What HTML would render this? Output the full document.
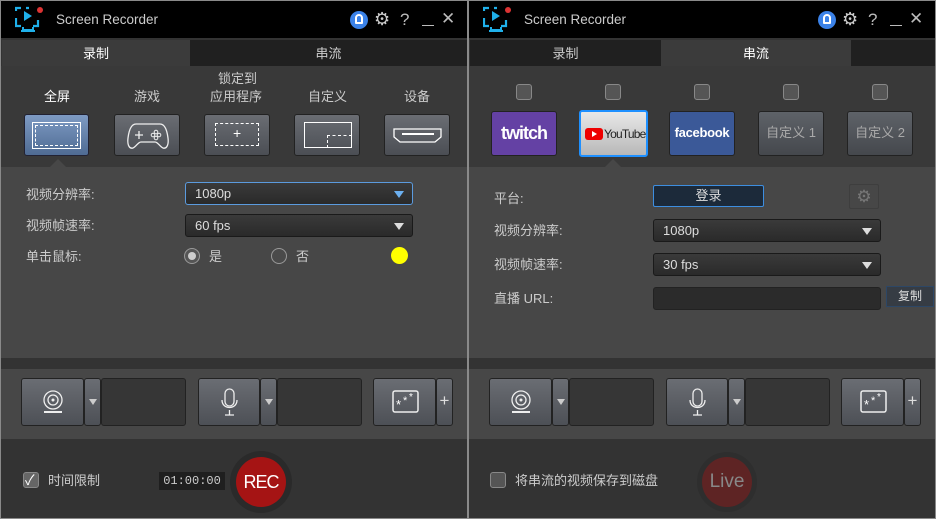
<!DOCTYPE html>
<html><head><meta charset="utf-8"><style>
*{margin:0;padding:0;box-sizing:border-box}
body{width:936px;height:519px;background:#000;position:relative;overflow:hidden;font-family:"Liberation Sans","Noto Sans CJK SC",sans-serif;font-size:13px;color:#ddd}
.w{position:absolute;top:0;width:468px;height:519px;border:1px solid #8a8a8a;background:#333;overflow:hidden}
.a{position:absolute}
.title{left:0;top:0;width:466px;height:37px;background:#000}
.tt{left:55px;top:11px;font-size:13.5px;color:#ccc;line-height:16px}
.tab{top:39px;height:27px;text-align:center;line-height:27px;font-size:13px;color:#ccc}
.mode{left:0;top:65px;width:466px;height:101px;background:#393939}
.set{left:0;top:166px;width:466px;height:191px;background:#474747}
.sep{left:0;top:357px;width:466px;height:11px;background:#333}
.tool{left:0;top:368px;width:466px;height:70px;background:#474747}
.bot{left:0;top:438px;width:466px;height:80px;background:#333}
.btn{height:42px;border:1px solid #222;border-radius:3px;background:linear-gradient(#6a6d73,#4b4e54);}
.lbl{font-size:13px;color:#ccc;line-height:16px}
.dd{height:23px;border:1px solid #1a1a1a;border-radius:3px;background:linear-gradient(#3a3a3a,#2a2a2a);color:#ddd;padding-left:9px;line-height:21px;font-size:13px}
.tri{position:absolute;right:8px;top:8px;width:0;height:0;border-left:5px solid transparent;border-right:5px solid transparent;border-top:7px solid #ddd}
.tb{top:377px;height:48px;border:1px solid #222;border-radius:3px;background:linear-gradient(#6a6d73,#4d5056)}
.pn{top:377px;height:48px;border:1px solid #222;border-radius:3px;background:#363636}
.cb{width:16px;height:16px;border:1px solid #888;border-radius:3px;background:#555}
</style></head><body>

<!-- LEFT -->
<div class="w" style="left:0">
<div class="a title"></div>
<svg class="a" style="left:14px;top:5px" width="30" height="28" viewBox="0 0 30 28"><path d="M1 5V2h5M1 12v8h5M18 20h5v-6M11 2h3" stroke="#1fb0ea" stroke-width="2.2" fill="none"/><path d="M9 5l8 5-8 5z" fill="#1fb0ea"/><path d="M8 21v3h10v-3M6 25h14" stroke="#1fb0ea" stroke-width="2" fill="none"/><circle cx="25" cy="4" r="3" fill="#d33"/></svg>
<div class="a tt">Screen Recorder</div>
<div class="a" style="left:349px;top:10px;width:18px;height:18px;border-radius:50%;background:#3b82e8"></div>
<div class="a" style="left:354px;top:13px;width:8px;height:10px;border:2px solid #fff;border-radius:4px 4px 1px 1px"></div>
<div class="a" style="left:373px;top:7px;font-size:18px;color:#ccc;line-height:22px">⚙</div>
<div class="a" style="left:399px;top:9px;font-size:17px;color:#bbb;line-height:20px">?</div>
<div class="a" style="left:421px;top:24px;width:12px;height:1px;background:#bbb"></div>
<div class="a" style="left:440px;top:8px;font-size:17px;color:#bbb;line-height:20px">✕</div>
<div class="a tab" style="left:1px;width:188px;background:#3b3b3b;color:#fff">录制</div>
<div class="a tab" style="left:189px;width:277px;background:#202020">串流</div>
<div class="a mode"></div>
<div class="a lbl" style="left:43px;top:88px;color:#fff">全屏</div>
<div class="a lbl" style="left:133px;top:88px">游戏</div>
<div class="a lbl" style="left:217px;top:70px">锁定到</div>
<div class="a lbl" style="left:209px;top:88px">应用程序</div>
<div class="a lbl" style="left:307px;top:88px">自定义</div>
<div class="a lbl" style="left:403px;top:88px">设备</div>
<div class="a btn" style="left:23px;top:113px;width:65px;background:linear-gradient(#7e9bc4,#4f6b93);border-color:#223"><div class="a" style="left:7px;top:7px;width:49px;height:27px;border:1px solid #fff;outline:1px dashed #fff;outline-offset:-4px"></div></div>
<div class="a btn" style="left:113px;top:113px;width:66px"><svg class="a" style="left:12px;top:6px" width="42" height="30"><path d="M9 3h24c5 0 7 6 8 14 1 8-2 11-5 10-3-1-5-6-8-6h-14c-3 0-5 5-8 6-3 1-6-2-5-10 1-8 3-14 8-14z" stroke="#eee" fill="none" stroke-width="1.3"/><path d="M12 10v8M8 14h8" stroke="#eee" stroke-width="1.3"/><circle cx="29" cy="11" r="1.8" stroke="#eee" fill="none"/><circle cx="26" cy="14" r="1.8" stroke="#eee" fill="none"/><circle cx="32" cy="14" r="1.8" stroke="#eee" fill="none"/><circle cx="29" cy="17" r="1.8" stroke="#eee" fill="none"/></svg></div>
<div class="a btn" style="left:203px;top:113px;width:66px"><div class="a" style="left:10px;top:8px;width:44px;height:23px;border:1px dashed #fff"></div><div class="a" style="left:28px;top:10px;color:#fff;font-size:14px">+</div></div>
<div class="a btn" style="left:293px;top:113px;width:66px"><div class="a" style="left:9px;top:7px;width:48px;height:26px;border:1px solid #fff"></div><div class="a" style="left:32px;top:20px;width:25px;height:13px;border-left:1px dashed #fff;border-top:1px dashed #fff"></div></div>
<div class="a btn" style="left:383px;top:113px;width:66px"><svg class="a" style="left:8px;top:12px" width="50" height="18"><path d="M1 2h47v8l-6 5H7l-6-5z" stroke="#fff" fill="none" stroke-width="1.3"/><path d="M9 7h32" stroke="#fff" stroke-width="2"/></svg></div>
<div class="a" style="left:49px;top:158px;width:0;height:0;border-left:8px solid transparent;border-right:8px solid transparent;border-bottom:8px solid #474747"></div>
<div class="a set"></div>
<div class="a lbl" style="left:25px;top:186px">视频分辨率:</div>
<div class="a lbl" style="left:25px;top:217px">视频帧速率:</div>
<div class="a lbl" style="left:25px;top:248px">单击鼠标:</div>
<div class="a dd" style="left:184px;top:181px;width:228px;border-color:#5b9bde">1080p<div class="tri" style="border-top-color:#6cb0f0"></div></div>
<div class="a dd" style="left:184px;top:213px;width:228px">60 fps<div class="tri"></div></div>
<div class="a" style="left:183px;top:247px;width:16px;height:16px;border-radius:50%;border:1px solid #999;background:#555"><div class="a" style="left:3px;top:3px;width:8px;height:8px;border-radius:50%;background:#ccc"></div></div>
<div class="a lbl" style="left:208px;top:248px">是</div>
<div class="a" style="left:270px;top:247px;width:16px;height:16px;border-radius:50%;border:1px solid #999;background:#4a4a4a"></div>
<div class="a lbl" style="left:295px;top:248px">否</div>
<div class="a" style="left:390px;top:246px;width:17px;height:17px;border-radius:50%;background:#ff0"></div>
<div class="a sep"></div><div class="a tool"></div>
<div class="a tb" style="left:20px;width:63px"><svg class="a" style="left:19px;top:10px" width="24" height="28"><circle cx="12" cy="11" r="9" stroke="#eee" fill="none" stroke-width="1.3"/><circle cx="12" cy="11" r="5" stroke="#eee" fill="none" stroke-width="1.3"/><circle cx="12" cy="11" r="1.5" fill="#eee"/><path d="M3 23h18" stroke="#eee" stroke-width="2"/></svg></div>
<div class="a tb" style="left:83px;width:17px"><div class="tri" style="right:3px;top:20px;border-top-color:#ccc;border-left-width:4px;border-right-width:4px;border-top-width:6px"></div></div>
<div class="a pn" style="left:100px;width:85px"></div>
<div class="a tb" style="left:197px;width:62px"><svg class="a" style="left:21px;top:9px" width="20" height="30"><rect x="5" y="1" width="9" height="17" rx="4.5" stroke="#eee" fill="none" stroke-width="1.3"/><path d="M2 12c0 10 15 10 15 0M9.5 22v5M5 27h9" stroke="#eee" fill="none" stroke-width="1.3"/></svg></div>
<div class="a tb" style="left:259px;width:17px"><div class="tri" style="right:3px;top:20px;border-top-color:#ccc;border-left-width:4px;border-right-width:4px;border-top-width:6px"></div></div>
<div class="a pn" style="left:276px;width:85px"></div>
<div class="a tb" style="left:372px;width:63px"><svg class="a" style="left:18px;top:11px" width="28" height="24"><rect x="1" y="1" width="25" height="21" rx="2" stroke="#eee" fill="none" stroke-width="1.5"/><text x="4" y="19" fill="#fff" font-size="13" font-family="Liberation Sans">*</text><text x="11" y="14" fill="#fff" font-size="11" font-family="Liberation Sans">*</text><text x="17" y="10" fill="#fff" font-size="10" font-family="Liberation Sans">*</text></svg></div>
<div class="a tb" style="left:435px;width:17px;color:#ddd;font-size:17px;text-align:center;line-height:44px">+</div>
<div class="a bot"></div>
<div class="a cb" style="left:22px;top:471px;background:#666"><span class="a" style="left:1px;top:-3px;font-size:14px;color:#fff">✓</span></div>
<div class="a lbl" style="left:47px;top:472px">时间限制</div>
<div class="a" style="left:158px;top:471px;width:66px;height:18px;background:#1f1f1f;color:#ccc;font-family:'Liberation Mono',monospace;font-size:12px;line-height:18px;text-align:center">01:00:00</div>
<div class="a" style="left:229px;top:450px;width:62px;height:62px;border-radius:50%;background:#2a2a2a"></div>
<div class="a" style="left:235px;top:456px;width:50px;height:50px;border-radius:50%;background:#a51414;color:#fff;font-size:18px;text-align:center;line-height:50px;letter-spacing:-1px">REC</div>
</div>

<!-- RIGHT -->
<div class="w" style="left:468px">
<div class="a title"></div>
<svg class="a" style="left:14px;top:5px" width="30" height="28" viewBox="0 0 30 28"><path d="M1 5V2h5M1 12v8h5M18 20h5v-6M11 2h3" stroke="#1fb0ea" stroke-width="2.2" fill="none"/><path d="M9 5l8 5-8 5z" fill="#1fb0ea"/><path d="M8 21v3h10v-3M6 25h14" stroke="#1fb0ea" stroke-width="2" fill="none"/><circle cx="25" cy="4" r="3" fill="#d33"/></svg>
<div class="a tt">Screen Recorder</div>
<div class="a" style="left:349px;top:10px;width:18px;height:18px;border-radius:50%;background:#3b82e8"></div>
<div class="a" style="left:354px;top:13px;width:8px;height:10px;border:2px solid #fff;border-radius:4px 4px 1px 1px"></div>
<div class="a" style="left:373px;top:7px;font-size:18px;color:#ccc;line-height:22px">⚙</div>
<div class="a" style="left:399px;top:9px;font-size:17px;color:#bbb;line-height:20px">?</div>
<div class="a" style="left:421px;top:24px;width:12px;height:1px;background:#bbb"></div>
<div class="a" style="left:440px;top:8px;font-size:17px;color:#bbb;line-height:20px">✕</div>
<div class="a tab" style="left:1px;width:191px;background:#202020">录制</div>
<div class="a tab" style="left:192px;width:190px;background:#3b3b3b;color:#fff">串流</div>
<div class="a tab" style="left:382px;width:84px;background:#202020"></div>
<div class="a mode"></div>
<div class="a cb" style="left:47px;top:83px"></div>
<div class="a cb" style="left:136px;top:83px"></div>
<div class="a cb" style="left:225px;top:83px"></div>
<div class="a cb" style="left:314px;top:83px"></div>
<div class="a cb" style="left:403px;top:83px"></div>
<div class="a btn" style="left:22px;top:110px;width:66px;height:45px;background:#6441a4;color:#fff;font-weight:bold;font-size:18px;text-align:center;line-height:42px;letter-spacing:-1px">twitch</div>
<div class="a btn" style="left:110px;top:109px;width:69px;height:47px;border:2px solid #1e90ff;background:linear-gradient(#e8e8e8,#b8b8b8)"><div class="a" style="left:4px;top:16px;width:18px;height:12px;background:#e00;border-radius:3px"></div><div class="a" style="left:11px;top:19px;width:0;height:0;border-top:3px solid transparent;border-bottom:3px solid transparent;border-left:5px solid #fff"></div><div class="a" style="left:23px;top:14px;color:#222;font-size:12px;letter-spacing:-0.8px;line-height:16px">YouTube</div></div>
<div class="a btn" style="left:200px;top:110px;width:66px;height:45px;background:#3b5998;color:#fff;font-weight:bold;font-size:13px;text-align:center;line-height:42px;letter-spacing:-0.3px">facebook</div>
<div class="a btn" style="left:289px;top:110px;width:66px;height:45px;background:linear-gradient(#5e6268,#45484d);color:#aaa;text-align:center;line-height:42px">自定义 1</div>
<div class="a btn" style="left:378px;top:110px;width:66px;height:45px;background:linear-gradient(#5e6268,#45484d);color:#aaa;text-align:center;line-height:42px">自定义 2</div>
<div class="a" style="left:136px;top:158px;width:0;height:0;border-left:8px solid transparent;border-right:8px solid transparent;border-bottom:8px solid #474747"></div>
<div class="a set"></div>
<div class="a lbl" style="left:25px;top:190px">平台:</div>
<div class="a lbl" style="left:25px;top:222px">视频分辨率:</div>
<div class="a lbl" style="left:25px;top:256px">视频帧速率:</div>
<div class="a lbl" style="left:25px;top:290px">直播 URL:</div>
<div class="a" style="left:184px;top:184px;width:111px;height:22px;border:1px solid #3d8ee0;border-radius:2px;background:#1c2a3a;color:#ddd;text-align:center;line-height:20px">登录</div>
<div class="a" style="left:380px;top:183px;width:30px;height:25px;border:1px solid #3e3e3e;border-radius:2px;color:#777;font-size:17px;text-align:center;line-height:23px">⚙</div>
<div class="a dd" style="left:184px;top:218px;width:228px">1080p<div class="tri"></div></div>
<div class="a dd" style="left:184px;top:252px;width:228px">30 fps<div class="tri"></div></div>
<div class="a" style="left:184px;top:286px;width:228px;height:23px;border:1px solid #222;border-radius:3px;background:#2b2b2b"></div>
<div class="a" style="left:417px;top:285px;width:48px;height:21px;border:1px solid #2d4766;background:#363c44;color:#ddd;font-size:12px;text-align:center;line-height:19px">复制</div>
<div class="a sep"></div><div class="a tool"></div>
<div class="a tb" style="left:20px;width:63px"><svg class="a" style="left:19px;top:10px" width="24" height="28"><circle cx="12" cy="11" r="9" stroke="#eee" fill="none" stroke-width="1.3"/><circle cx="12" cy="11" r="5" stroke="#eee" fill="none" stroke-width="1.3"/><circle cx="12" cy="11" r="1.5" fill="#eee"/><path d="M3 23h18" stroke="#eee" stroke-width="2"/></svg></div>
<div class="a tb" style="left:83px;width:17px"><div class="tri" style="right:3px;top:20px;border-top-color:#ccc;border-left-width:4px;border-right-width:4px;border-top-width:6px"></div></div>
<div class="a pn" style="left:100px;width:85px"></div>
<div class="a tb" style="left:197px;width:62px"><svg class="a" style="left:21px;top:9px" width="20" height="30"><rect x="5" y="1" width="9" height="17" rx="4.5" stroke="#eee" fill="none" stroke-width="1.3"/><path d="M2 12c0 10 15 10 15 0M9.5 22v5M5 27h9" stroke="#eee" fill="none" stroke-width="1.3"/></svg></div>
<div class="a tb" style="left:259px;width:17px"><div class="tri" style="right:3px;top:20px;border-top-color:#ccc;border-left-width:4px;border-right-width:4px;border-top-width:6px"></div></div>
<div class="a pn" style="left:276px;width:85px"></div>
<div class="a tb" style="left:372px;width:63px"><svg class="a" style="left:18px;top:11px" width="28" height="24"><rect x="1" y="1" width="25" height="21" rx="2" stroke="#eee" fill="none" stroke-width="1.5"/><text x="4" y="19" fill="#fff" font-size="13" font-family="Liberation Sans">*</text><text x="11" y="14" fill="#fff" font-size="11" font-family="Liberation Sans">*</text><text x="17" y="10" fill="#fff" font-size="10" font-family="Liberation Sans">*</text></svg></div>
<div class="a tb" style="left:435px;width:17px;color:#ddd;font-size:17px;text-align:center;line-height:44px">+</div>
<div class="a bot"></div>
<div class="a cb" style="left:21px;top:471px"></div>
<div class="a lbl" style="left:46px;top:472px">将串流的视频保存到磁盘</div>
<div class="a" style="left:228px;top:451px;width:60px;height:60px;border-radius:50%;background:#2e2e2e"></div>
<div class="a" style="left:233px;top:456px;width:50px;height:50px;border-radius:50%;background:#5e2424;color:#888;font-size:19px;text-align:center;line-height:50px">Live</div>
</div>
</body></html>
